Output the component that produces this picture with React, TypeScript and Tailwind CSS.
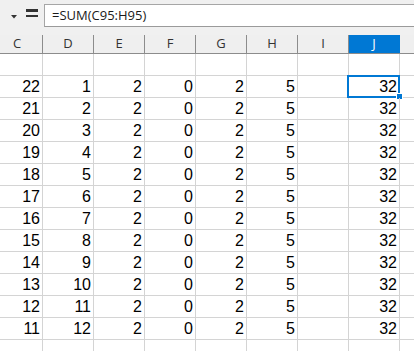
import React from "react";

const cols = ["C", "D", "E", "F", "G", "H", "I", "J", ""];

export default function App() {
  const rows = Array.from({ length: 12 }, (_, i) => [
    String(22 - i),
    String(i + 1),
    "2",
    "0",
    "2",
    "5",
    "",
    "32",
    "",
  ]);
  return (
    <div
      className="w-[414px] h-[351px] overflow-hidden bg-white"
      style={{ fontFamily: "'Liberation Sans', Arial, sans-serif" }}
    >
      {/* formula bar */}
      <div className="h-[35px] bg-[#f0f0f0] flex items-start">
        <div className="w-[26px] h-[30px] flex items-center justify-center pl-[1px]">
          <svg width="6" height="4" viewBox="0 0 6 4" className="mt-[3px]">
            <path d="M0 0 L6 0 L3 3.5 Z" fill="#333" />
          </svg>
        </div>
        <div className="w-[12px] mt-[9px] flex flex-col gap-[3px]">
          <div className="h-[2.5px] bg-[#333]" />
          <div className="h-[2.5px] bg-[#333]" />
        </div>
        <div
          className="ml-[6px] mt-[4px] h-[23px] flex-1 bg-white border border-r-0 border-[#a6a6a6] border-b-[#9a9a9a] flex items-center pl-[7px] text-[13px] text-[#1a1a1a]"
          style={{ fontFamily: "'Open Sans', 'Noto Sans', sans-serif" }}
        >
          =SUM(C95:H95)
        </div>
      </div>
      {/* grid */}
      <div className="ml-[-8px]">
        <div className="flex h-[19px] bg-[#efefef] border-b border-[#8c8c8c]">
          {cols.map((c, i) => (
            <div
              key={i}
              className={`w-[51px] shrink-0 flex items-center justify-center text-[13px] border-r ${
                c === "J"
                  ? "bg-[#0078d4] text-white border-[#0078d4]"
                  : "text-[#333] border-[#8c8c8c]"
              }`}
              style={{ fontFamily: "'Open Sans', 'Noto Sans', sans-serif" }}
            >
              {c}
            </div>
          ))}
        </div>
        <div className="flex h-[22px] border-b border-[#d4d4d4]">
          {cols.map((_, i) => (
            <div key={i} className="w-[51px] shrink-0 border-r border-[#d4d4d4]" />
          ))}
        </div>
        {rows.map((r, ri) => (
          <div key={ri} className="flex h-[22px] border-b border-[#d4d4d4]">
            {r.map((v, ci) => (
              <div
                key={ci}
                className="relative w-[51px] shrink-0 border-r border-[#d4d4d4] flex items-end justify-end pr-[2px] pb-[1px] text-[16px] leading-[19px] text-black"
              >
                {v}
                {ri === 0 && ci === 7 && (
                  <>
                    <div className="absolute left-[-2px] top-[-1px] w-[53px] h-[23px] border-2 border-[#0078d4] pointer-events-none" />
                    <div className="absolute right-[-4px] bottom-[-3px] w-[5px] h-[5px] bg-[#0078d4] border border-white box-content" />
                  </>
                )}
              </div>
            ))}
          </div>
        ))}
        <div className="flex h-[22px]">
          {cols.map((_, i) => (
            <div key={i} className="w-[51px] shrink-0 border-r border-[#d4d4d4]" />
          ))}
        </div>
      </div>
    </div>
  );
}
